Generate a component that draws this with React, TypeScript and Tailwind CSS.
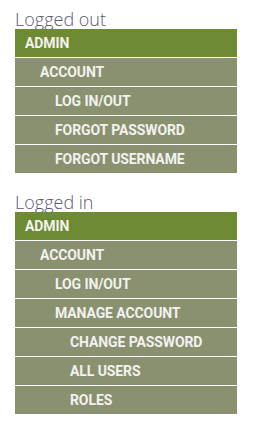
import React from 'react';

interface MenuItem {
  label: string;
  level: number;
}

const loggedOut: MenuItem[] = [
  { label: 'ADMIN', level: 0 },
  { label: 'ACCOUNT', level: 1 },
  { label: 'LOG IN/OUT', level: 2 },
  { label: 'FORGOT PASSWORD', level: 2 },
  { label: 'FORGOT USERNAME', level: 2 },
];

const loggedIn: MenuItem[] = [
  { label: 'ADMIN', level: 0 },
  { label: 'ACCOUNT', level: 1 },
  { label: 'LOG IN/OUT', level: 2 },
  { label: 'MANAGE ACCOUNT', level: 2 },
  { label: 'CHANGE PASSWORD', level: 3 },
  { label: 'ALL USERS', level: 3 },
  { label: 'ROLES', level: 3 },
];

const indent = ['pl-[10px]', 'pl-[25px]', 'pl-[40px]', 'pl-[55px]'];

const Menu: React.FC<{ title: string; items: MenuItem[] }> = ({ title, items }) => (
  <div>
    <h2 className="text-[18px] leading-[20px] font-light text-[#5c5872] font-['Open_Sans',sans-serif]">
      {title}
    </h2>
    <ul className="w-[222px] flex flex-col gap-px">
      {items.map((item, i) => (
        <li
          key={i}
          className={`h-[28px] flex items-center text-[14px] font-bold tracking-[-0.1px] text-[#f2f2ee] font-['Roboto',sans-serif] ${indent[item.level]} ${
            item.level === 0 ? 'bg-[#6e8a33]' : 'bg-[#8a9170]'
          }`}
        >
          {item.label}
        </li>
      ))}
    </ul>
  </div>
);

export default function App() {
  return (
    <div className="bg-white w-[255px] h-[432px] pl-[15px] pt-[9px] flex flex-col gap-[19px]">
      <Menu title="Logged out" items={loggedOut} />
      <Menu title="Logged in" items={loggedIn} />
    </div>
  );
}
